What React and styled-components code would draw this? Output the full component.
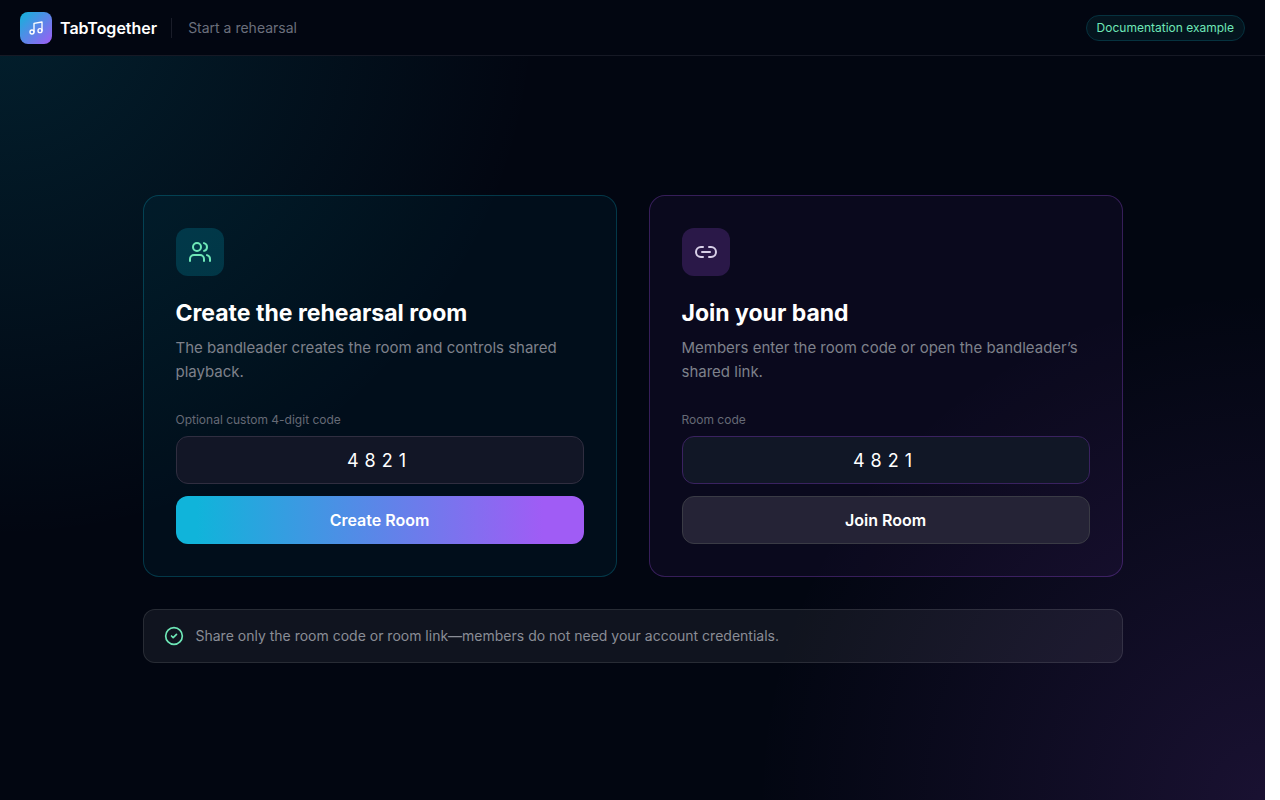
import { useState } from "react";
import styled, { createGlobalStyle } from "styled-components";
import { CircleCheck, Link2, Music, Users } from "lucide-react";

const App = () => {
  const [createCode, setCreateCode] = useState("4821");
  const [joinCode, setJoinCode] = useState("4821");

  return (
    <>
      <GlobalStyle />
      <PageStyle>
        <HeaderStyle>
          <LogoStyle>
            <Music size={16} />
          </LogoStyle>
          <BrandStyle>TabTogether</BrandStyle>
          <SubtitleStyle>Start a rehearsal</SubtitleStyle>
          <BadgeStyle>Documentation example</BadgeStyle>
        </HeaderStyle>

        <MainStyle>
          <ContentStyle>
            <CardsStyle>
              <CardStyle $tone="cyan">
                <IconBoxStyle $tone="cyan">
                  <Users size={24} />
                </IconBoxStyle>
                <TitleStyle>Create the rehearsal room</TitleStyle>
                <TextStyle>
                  The bandleader creates the room and controls shared playback.
                </TextStyle>
                <LabelStyle htmlFor="create-code">
                  Optional custom 4-digit code
                </LabelStyle>
                <CodeInput
                  id="create-code"
                  $tone="cyan"
                  maxLength={4}
                  inputMode="numeric"
                  value={createCode}
                  onChange={(e) => setCreateCode(e.target.value)}
                />
                <RoomButton type="button" $primary>
                  Create Room
                </RoomButton>
              </CardStyle>

              <CardStyle $tone="purple">
                <IconBoxStyle $tone="purple">
                  <Link2 size={24} />
                </IconBoxStyle>
                <TitleStyle>Join your band</TitleStyle>
                <TextStyle>
                  Members enter the room code or open the bandleader’s shared
                  link.
                </TextStyle>
                <LabelStyle htmlFor="join-code">Room code</LabelStyle>
                <CodeInput
                  id="join-code"
                  $tone="purple"
                  maxLength={4}
                  inputMode="numeric"
                  value={joinCode}
                  onChange={(e) => setJoinCode(e.target.value)}
                />
                <RoomButton type="button">Join Room</RoomButton>
              </CardStyle>
            </CardsStyle>

            <NoticeStyle>
              <CircleCheck size={20} />
              <span>
                Share only the room code or room link—members do not need your
                account credentials.
              </span>
            </NoticeStyle>
          </ContentStyle>
        </MainStyle>
      </PageStyle>
    </>
  );
};

export default App;

const tones = {
  cyan: {
    card: "rgba(6, 182, 212, 0.05)",
    border: "rgba(6, 182, 212, 0.25)",
    icon: "rgba(6, 182, 212, 0.2)",
    iconColor: "#6ee7b7",
    input: "#121626",
    inputBorder: "#302e40",
  },
  purple: {
    card: "rgba(168, 85, 247, 0.05)",
    border: "rgba(168, 85, 247, 0.28)",
    icon: "rgba(168, 85, 247, 0.2)",
    iconColor: "#d8d0e8",
    input: "#111726",
    inputBorder: "#3a2260",
  },
};

const GlobalStyle = createGlobalStyle`
  * {
    box-sizing: border-box;
  }

  html {
    background: #ffffff;
  }

  body {
    margin: 0;
    padding-right: 15px;
    font-family: Inter, "Liberation Sans", sans-serif;
    color: #ffffff;
  }
`;

const PageStyle = styled.div`
  display: flex;
  flex-direction: column;
  min-height: 100vh;
  background:
    radial-gradient(circle at top left, rgba(6, 182, 212, 0.15), transparent 36%),
    radial-gradient(circle at bottom right, rgba(168, 85, 247, 0.14), transparent 34%),
    #020611;
`;

const HeaderStyle = styled.header`
  display: flex;
  align-items: center;
  height: 56px;
  padding: 0 20px;
  background: #020611;
  border-bottom: 1px solid #161925;
`;

const LogoStyle = styled.div`
  display: grid;
  place-items: center;
  width: 32px;
  height: 32px;
  border-radius: 8px;
  background: linear-gradient(135deg, #10b4da, #a05cf5);
`;

const BrandStyle = styled.span`
  margin-left: 8px;
  font-size: 16px;
  font-weight: 600;
`;

const SubtitleStyle = styled.span`
  margin-left: 14px;
  padding-left: 16px;
  border-left: 1px solid #1a1d29;
  font-size: 14px;
  line-height: 20px;
  color: #6b6f7c;
`;

const BadgeStyle = styled.span`
  margin-left: auto;
  padding: 4px 10px;
  border: 1px solid #06323f;
  border-radius: 999px;
  background: #04141e;
  font-size: 12px;
  line-height: 16px;
  color: #6ee7b7;
`;

const MainStyle = styled.main`
  display: flex;
  flex: 1;
  align-items: center;
  justify-content: center;
  padding: 34px 24px 32px;
`;

const ContentStyle = styled.div`
  display: grid;
  gap: 32px;
  width: 100%;
  max-width: 980px;
`;

const CardsStyle = styled.div`
  display: grid;
  grid-template-columns: repeat(2, 1fr);
  gap: 32px;
`;

const CardStyle = styled.section`
  display: flex;
  flex-direction: column;
  padding: 32px;
  border: 1px solid ${({ $tone }) => tones[$tone].border};
  border-radius: 16px;
  background: ${({ $tone }) => tones[$tone].card};
`;

const IconBoxStyle = styled.div`
  display: grid;
  place-items: center;
  width: 48px;
  height: 48px;
  border-radius: 12px;
  background: ${({ $tone }) => tones[$tone].icon};
  color: ${({ $tone }) => tones[$tone].iconColor};
`;

const TitleStyle = styled.h2`
  margin: 20px 0 6px;
  font-size: 23px;
  font-weight: 700;
  line-height: 34px;
`;

const TextStyle = styled.p`
  margin: 0 0 28px;
  font-size: 15px;
  line-height: 24px;
  color: #7e818b;
`;

const LabelStyle = styled.label`
  margin-bottom: 8px;
  font-size: 12px;
  line-height: 16px;
  color: #666a76;
`;

const CodeInput = styled.input`
  width: 100%;
  height: 48px;
  margin-bottom: 12px;
  border: 1px solid ${({ $tone }) => tones[$tone].inputBorder};
  border-radius: 12px;
  background: ${({ $tone }) => tones[$tone].input};
  font-family: inherit;
  font-size: 18px;
  letter-spacing: 6px;
  text-align: center;
  color: #ffffff;
`;

const RoomButton = styled.button`
  height: 48px;
  border: ${({ $primary }) => ($primary ? "none" : "1px solid #3a3b45")};
  border-radius: 12px;
  background: ${({ $primary }) =>
    $primary ? "linear-gradient(90deg, #10b4da 5%, #a05cf5 90%)" : "#252336"};
  font-family: inherit;
  font-size: 16px;
  font-weight: 600;
  color: #ffffff;
  cursor: pointer;
`;

const NoticeStyle = styled.div`
  display: flex;
  align-items: center;
  gap: 12px;
  padding: 16px 20px;
  border: 1px solid rgba(255, 255, 255, 0.1);
  border-radius: 12px;
  background: rgba(255, 255, 255, 0.06);
  font-size: 14px;
  line-height: 20px;
  color: #8a8d96;

  svg {
    color: #6ee7b7;
  }
`;
